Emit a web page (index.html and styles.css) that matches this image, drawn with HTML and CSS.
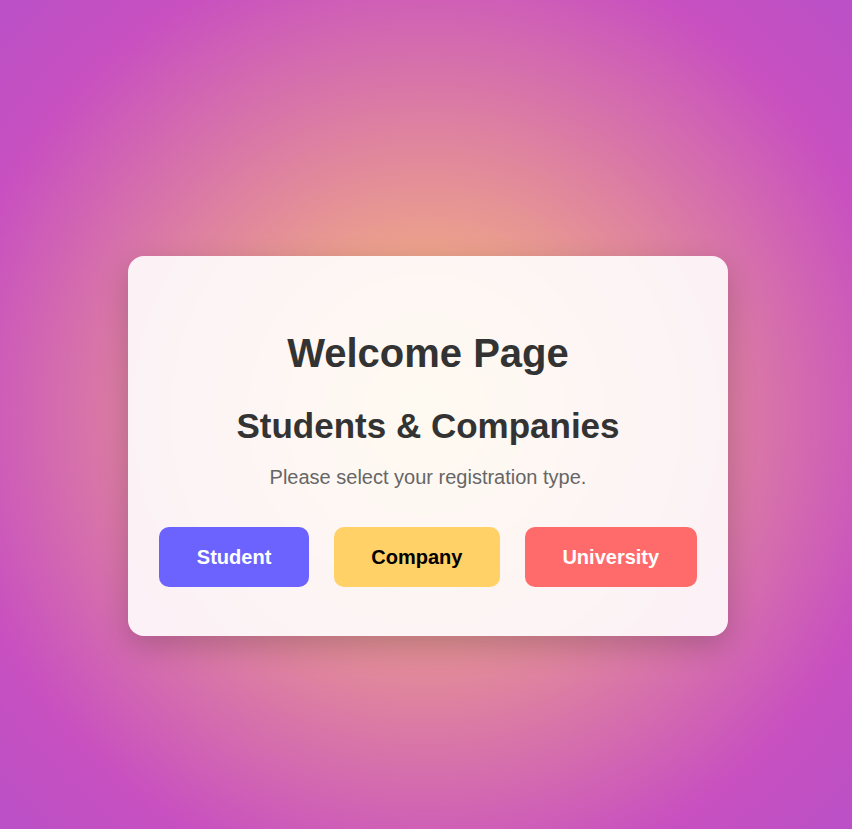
FILE: index.html
```html
<!DOCTYPE html>
<html lang="en">
<head>
<meta charset="utf-8">
<title>Welcome Page</title>
<link rel="stylesheet" href="styles.css">
</head>
<body>
<main class="page">
  <section class="card">
    <h1 class="title">Welcome Page</h1>
    <h2 class="subtitle">Students &amp; Companies</h2>
    <p class="lead">Please select your registration type.</p>
    <div class="actions">
      <button class="btn btn-student" type="button">Student</button>
      <button class="btn btn-company" type="button">Company</button>
      <button class="btn btn-university" type="button">University</button>
    </div>
  </section>
</main>
</body>
</html>
```

FILE: styles.css
```css
html, body {
  margin: 0;
  padding: 0;
  height: 100%;
}

body {
  font-family: "Liberation Sans", Arial, sans-serif;
  background: radial-gradient(circle at 50% 50%, #ffcc70 0%, #c850c0 80%, #ba50c7 100%);
  overflow: hidden;
}

.page {
  box-sizing: border-box;
  height: 100vh;
  display: flex;
  align-items: center;
  justify-content: center;
  padding: 63px 0 0 4px;
}

.card {
  box-sizing: border-box;
  width: 600px;
  padding: 75px 30px 49px;
  background: rgba(255, 255, 255, 0.9);
  border-radius: 16px;
  box-shadow: 0 10px 30px rgba(0, 0, 0, 0.2);
  text-align: center;
}

.title {
  margin: 0 0 30px;
  font-size: 40px;
  font-weight: bold;
  color: #333;
}

.subtitle {
  margin: 0 0 20px;
  font-size: 35px;
  font-weight: bold;
  color: #333;
}

.lead {
  margin: 0 0 38px;
  font-size: 20px;
  color: #666;
}

.actions {
  display: flex;
  justify-content: center;
  gap: 25px;
}

.btn {
  border: none;
  border-radius: 10px;
  padding: 18px 37.5px;
  font-family: "Liberation Sans", Arial, sans-serif;
  font-size: 20px;
  line-height: 24px;
  font-weight: bold;
  cursor: pointer;
}

.btn-student {
  background: #6c63ff;
  color: #fff;
}

.btn-company {
  background: #ffd166;
  color: #000;
}

.btn-university {
  background: #ff6b6b;
  color: #fff;
}
```
